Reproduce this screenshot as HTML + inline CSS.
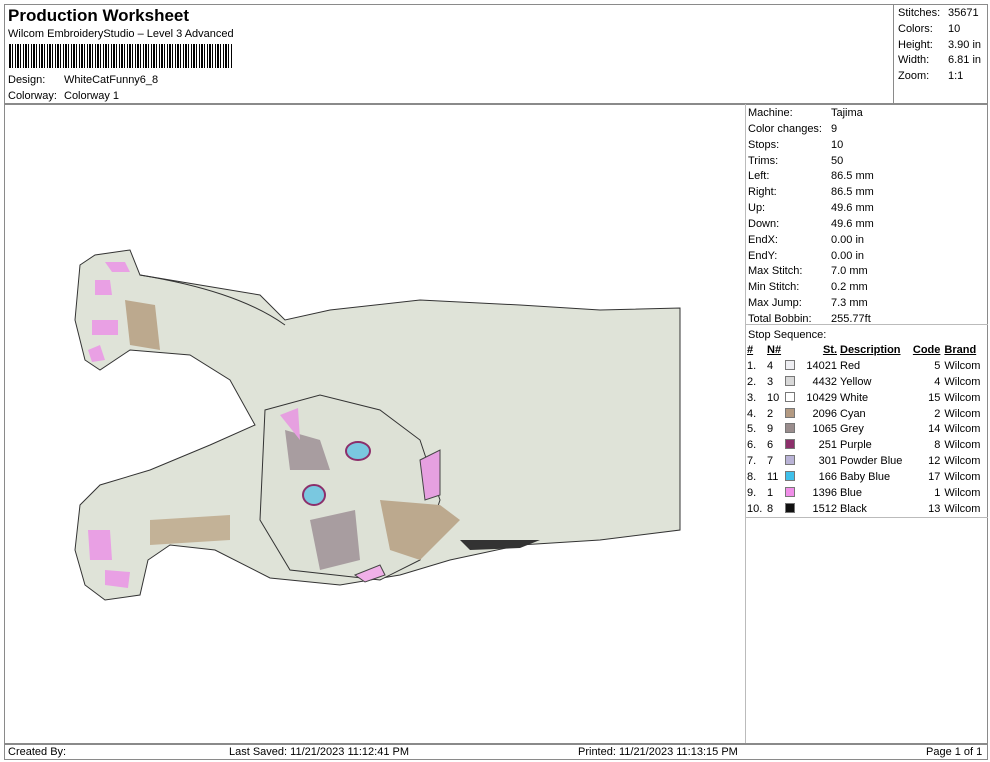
<!DOCTYPE html>
<html><head><meta charset="utf-8"><style>
*{margin:0;padding:0;box-sizing:border-box}
body{width:990px;height:762px;background:#fff;font-family:"Liberation Sans",Arial,sans-serif;font-size:11px;color:#000;position:relative;overflow:hidden}
.a{position:absolute;white-space:nowrap}
.ln{position:absolute;background:#8a8a8a}
table{border-collapse:collapse;font-size:11px}
td{padding:0;height:15.9px;white-space:nowrap}
.sw{display:inline-block;width:10px;height:10px;border:1px solid #777;vertical-align:-1px}
</style></head><body>
<div class="ln" style="left:4px;top:4px;width:984px;height:1px"></div>
<div class="ln" style="left:4px;top:4px;width:1px;height:756px"></div>
<div class="ln" style="left:987px;top:4px;width:1px;height:756px"></div>
<div class="ln" style="left:4px;top:103px;width:984px;height:2px"></div>
<div class="ln" style="left:893px;top:4px;width:1px;height:100px"></div>
<div class="ln" style="left:745px;top:104px;width:1px;height:639px;background:#bbb"></div>
<div class="ln" style="left:745px;top:324px;width:243px;height:1px;background:#bbb"></div>
<div class="ln" style="left:745px;top:517px;width:243px;height:1px;background:#bbb"></div>
<div class="ln" style="left:4px;top:743px;width:984px;height:2px"></div>
<div class="ln" style="left:4px;top:759px;width:984px;height:1px"></div>

<div class="a" style="left:8px;top:6px;font-size:17px;font-weight:bold">Production Worksheet</div>
<div class="a" style="left:8px;top:28px">Wilcom EmbroideryStudio – Level 3 Advanced</div>
<div class="a" style="left:9px;top:44px;width:223px;height:24px;background:repeating-linear-gradient(90deg,#000 0 2px,#fff 2px 3px,#000 3px 4px,#fff 4px 6px,#000 6px 7px,#fff 7px 8px)"></div>
<div class="a" style="left:8px;top:74px">Design:</div><div class="a" style="left:64px;top:74px">WhiteCatFunny6_8</div>
<div class="a" style="left:8px;top:90px">Colorway:</div><div class="a" style="left:64px;top:90px">Colorway 1</div>

<div class="a" style="left:898px;top:6px;line-height:15.8px">Stitches:<br>Colors:<br>Height:<br>Width:<br>Zoom:</div>
<div class="a" style="left:948px;top:6px;line-height:15.8px">35671<br>10<br>3.90 in<br>6.81 in<br>1:1</div>

<div class="a" style="left:748px;top:106px;line-height:15.85px">Machine:<br>Color changes:<br>Stops:<br>Trims:<br>Left:<br>Right:<br>Up:<br>Down:<br>EndX:<br>EndY:<br>Max Stitch:<br>Min Stitch:<br>Max Jump:<br>Total Bobbin:<br>Stop Sequence:</div>
<div class="a" style="left:831px;top:106px;line-height:15.85px">Tajima<br>9<br>10<br>50<br>86.5 mm<br>86.5 mm<br>49.6 mm<br>49.6 mm<br>0.00 in<br>0.00 in<br>7.0 mm<br>0.2 mm<br>7.3 mm<br>255.77ft</div>

<table class="a" style="left:747px;top:342px;width:238px">
<tr style="font-weight:bold;text-decoration:underline"><td style="width:20px">#</td><td style="width:18px">N#</td><td style="width:14px"></td><td style="width:38px;text-align:right">St.</td><td style="padding-left:3px">Description</td><td style="text-align:right">Code</td><td style="padding-left:4px">Brand</td></tr>
<tr><td>1.</td><td>4</td><td><span class="sw" style="background:#eeeef2"></span></td><td align="right">14021</td><td style="padding-left:3px">Red</td><td align="right">5</td><td style="padding-left:4px">Wilcom</td></tr>
<tr><td>2.</td><td>3</td><td><span class="sw" style="background:#d8d8d8"></span></td><td align="right">4432</td><td style="padding-left:3px">Yellow</td><td align="right">4</td><td style="padding-left:4px">Wilcom</td></tr>
<tr><td>3.</td><td>10</td><td><span class="sw" style="background:#fff"></span></td><td align="right">10429</td><td style="padding-left:3px">White</td><td align="right">15</td><td style="padding-left:4px">Wilcom</td></tr>
<tr><td>4.</td><td>2</td><td><span class="sw" style="background:#b39a82"></span></td><td align="right">2096</td><td style="padding-left:3px">Cyan</td><td align="right">2</td><td style="padding-left:4px">Wilcom</td></tr>
<tr><td>5.</td><td>9</td><td><span class="sw" style="background:#9a8d8d"></span></td><td align="right">1065</td><td style="padding-left:3px">Grey</td><td align="right">14</td><td style="padding-left:4px">Wilcom</td></tr>
<tr><td>6.</td><td>6</td><td><span class="sw" style="background:#8c2f6b"></span></td><td align="right">251</td><td style="padding-left:3px">Purple</td><td align="right">8</td><td style="padding-left:4px">Wilcom</td></tr>
<tr><td>7.</td><td>7</td><td><span class="sw" style="background:#b9b3d6"></span></td><td align="right">301</td><td style="padding-left:3px">Powder Blue</td><td align="right">12</td><td style="padding-left:4px">Wilcom</td></tr>
<tr><td>8.</td><td>11</td><td><span class="sw" style="background:#3fc0ea"></span></td><td align="right">166</td><td style="padding-left:3px">Baby Blue</td><td align="right">17</td><td style="padding-left:4px">Wilcom</td></tr>
<tr><td>9.</td><td>1</td><td><span class="sw" style="background:#f08ee8"></span></td><td align="right">1396</td><td style="padding-left:3px">Blue</td><td align="right">1</td><td style="padding-left:4px">Wilcom</td></tr>
<tr><td>10.</td><td>8</td><td><span class="sw" style="background:#111"></span></td><td align="right">1512</td><td style="padding-left:3px">Black</td><td align="right">13</td><td style="padding-left:4px">Wilcom</td></tr>
</table>

<svg class="a" style="left:0;top:0" width="745" height="743">
<path d="M80,265 L95,255 L130,250 L140,275 L200,285 L260,295 L285,320 L330,310 L420,300 L520,305 L600,310 L680,308 L680,530 L600,540 L520,545 L450,560 L400,575 L340,585 L270,578 L215,550 L170,545 L148,560 L140,595 L105,600 L85,585 L75,550 L80,505 L100,485 L150,470 L210,445 L255,425 L230,380 L190,355 L130,350 L100,370 L85,360 L75,320 Z" fill="#dfe3d8" stroke="#333" stroke-width="1"/>
<path d="M140,275 C200,285 250,300 285,325" fill="none" stroke="#333"/>
<path d="M265,410 L320,395 L380,410 L420,440 L440,500 L420,560 L380,580 L290,570 L260,520 Z" fill="#dde1d6" stroke="#333" stroke-width="1"/>
<path d="M380,500 L440,505 L460,520 L420,560 L390,550 Z" fill="#bca98e"/>
<path d="M310,520 L355,510 L360,560 L320,570 Z" fill="#a89da0"/>
<path d="M285,430 L320,440 L330,470 L290,470 Z" fill="#a89da0"/>
<path d="M420,460 L440,450 L440,495 L425,500 Z" fill="#e6a0e0" stroke="#444"/>
<path d="M280,415 L298,408 L300,440 Z" fill="#e6a0e0"/>
<ellipse cx="358" cy="451" rx="12" ry="9" fill="#7ac8e0" stroke="#8c2f6b" stroke-width="2"/>
<ellipse cx="314" cy="495" rx="11" ry="10" fill="#7ac8e0" stroke="#8c2f6b" stroke-width="2"/>
<path d="M355,575 L380,565 L385,575 L365,582 Z" fill="#f0b0e8" stroke="#444"/>
<path d="M105,262 L125,262 L130,272 L112,272 Z M95,280 L110,280 L112,295 L95,295 Z M92,320 L118,320 L118,335 L92,335 Z M88,350 L100,345 L105,360 L92,362 Z" fill="#e9a0e4"/>
<path d="M125,300 L155,305 L160,350 L130,345 Z" fill="#bca98e"/>
<path d="M88,530 L110,530 L112,560 L90,560 Z M105,570 L130,572 L128,588 L105,585 Z" fill="#e9a0e4"/>
<path d="M150,520 L230,515 L230,540 L150,545 Z" fill="#c3b297"/>
<path d="M460,540 L540,540 L520,548 L470,550 Z" fill="#333"/>
</svg>

<div class="a" style="left:8px;top:746px">Created By:</div>
<div class="a" style="left:229px;top:746px">Last Saved: 11/21/2023 11:12:41 PM</div>
<div class="a" style="left:578px;top:746px">Printed: 11/21/2023 11:13:15 PM</div>
<div class="a" style="left:926px;top:746px">Page 1 of 1</div>
</body></html>
